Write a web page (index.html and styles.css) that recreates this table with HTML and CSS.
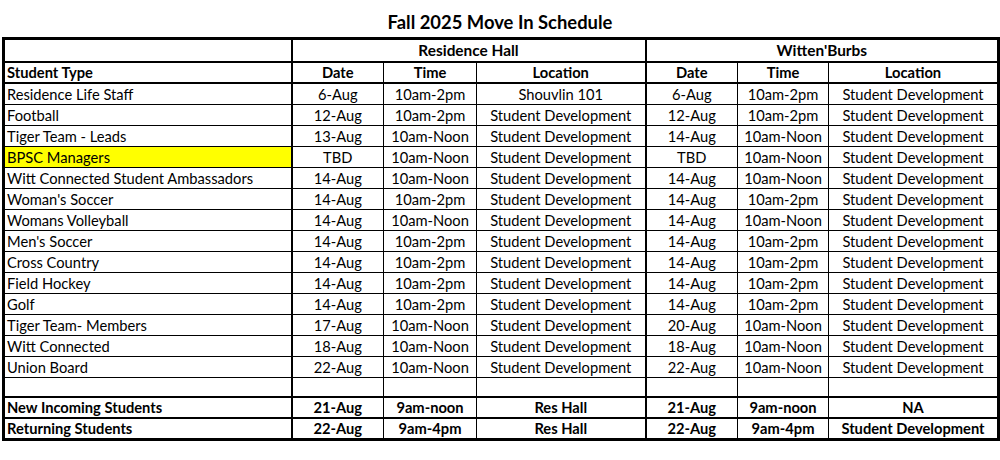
FILE: index.html
```html
<!DOCTYPE html>
<html>
<head>
<meta charset="utf-8">
<link rel="stylesheet" href="styles.css">
</head>
<body>
<div class="page">
  <h1 class="title">Fall 2025 Move In Schedule</h1>
  <table class="sched">
    <colgroup>
      <col class="c-type"><col class="c-date"><col class="c-time"><col class="c-loc">
      <col class="c-date"><col class="c-time2"><col class="c-loc2">
    </colgroup>
    <tr class="group">
      <td class="type"></td>
      <td colspan="3" class="b grp-end">Residence Hall</td>
      <td colspan="3" class="b">Witten'Burbs</td>
    </tr>
    <tr class="head">
      <td class="type b">Student Type</td>
      <td class="b">Date</td><td class="b">Time</td><td class="b grp-end">Location</td>
      <td class="b">Date</td><td class="b">Time</td><td class="b">Location</td>
    </tr>
    <tr><td class="type">Residence Life Staff</td><td>6-Aug</td><td>10am-2pm</td><td class="grp-end">Shouvlin 101</td><td>6-Aug</td><td>10am-2pm</td><td>Student Development</td></tr>
    <tr><td class="type">Football</td><td>12-Aug</td><td>10am-2pm</td><td class="grp-end">Student Development</td><td>12-Aug</td><td>10am-2pm</td><td>Student Development</td></tr>
    <tr><td class="type">Tiger Team - Leads</td><td>13-Aug</td><td>10am-Noon</td><td class="grp-end">Student Development</td><td>14-Aug</td><td>10am-Noon</td><td>Student Development</td></tr>
    <tr><td class="type hl">BPSC Managers</td><td>TBD</td><td>10am-Noon</td><td class="grp-end">Student Development</td><td>TBD</td><td>10am-Noon</td><td>Student Development</td></tr>
    <tr><td class="type">Witt Connected Student Ambassadors</td><td>14-Aug</td><td>10am-Noon</td><td class="grp-end">Student Development</td><td>14-Aug</td><td>10am-Noon</td><td>Student Development</td></tr>
    <tr><td class="type">Woman's Soccer</td><td>14-Aug</td><td>10am-2pm</td><td class="grp-end">Student Development</td><td>14-Aug</td><td>10am-2pm</td><td>Student Development</td></tr>
    <tr><td class="type">Womans Volleyball</td><td>14-Aug</td><td>10am-Noon</td><td class="grp-end">Student Development</td><td>14-Aug</td><td>10am-Noon</td><td>Student Development</td></tr>
    <tr><td class="type">Men's Soccer</td><td>14-Aug</td><td>10am-2pm</td><td class="grp-end">Student Development</td><td>14-Aug</td><td>10am-2pm</td><td>Student Development</td></tr>
    <tr><td class="type">Cross Country</td><td>14-Aug</td><td>10am-2pm</td><td class="grp-end">Student Development</td><td>14-Aug</td><td>10am-2pm</td><td>Student Development</td></tr>
    <tr><td class="type">Field Hockey</td><td>14-Aug</td><td>10am-2pm</td><td class="grp-end">Student Development</td><td>14-Aug</td><td>10am-2pm</td><td>Student Development</td></tr>
    <tr><td class="type">Golf</td><td>14-Aug</td><td>10am-2pm</td><td class="grp-end">Student Development</td><td>14-Aug</td><td>10am-2pm</td><td>Student Development</td></tr>
    <tr><td class="type">Tiger Team- Members</td><td>17-Aug</td><td>10am-Noon</td><td class="grp-end">Student Development</td><td>20-Aug</td><td>10am-Noon</td><td>Student Development</td></tr>
    <tr><td class="type">Witt Connected</td><td>18-Aug</td><td>10am-Noon</td><td class="grp-end">Student Development</td><td>18-Aug</td><td>10am-Noon</td><td>Student Development</td></tr>
    <tr><td class="type">Union Board</td><td>22-Aug</td><td>10am-Noon</td><td class="grp-end">Student Development</td><td>22-Aug</td><td>10am-Noon</td><td>Student Development</td></tr>
    <tr class="blank"><td class="type"></td><td></td><td></td><td class="grp-end"></td><td></td><td></td><td></td></tr>
    <tr class="bold-row"><td class="type">New Incoming Students</td><td>21-Aug</td><td>9am-noon</td><td class="grp-end">Res Hall</td><td>21-Aug</td><td>9am-noon</td><td>NA</td></tr>
    <tr class="bold-row"><td class="type">Returning Students</td><td>22-Aug</td><td>9am-4pm</td><td class="grp-end">Res Hall</td><td>22-Aug</td><td>9am-4pm</td><td>Student Development</td></tr>
  </table>
</div>
</body>
</html>
```
FILE: styles.css
```css
html, body {
  margin: 0;
  padding: 0;
  background: #fff;
}
body {
  font-family: Lato, "Open Sans", "Liberation Sans", sans-serif;
  color: #000;
}
.page {
  padding: 0 2px 0 2px;
}
.title {
  margin: 0;
  height: 37px;
  padding-top: 11px;
  box-sizing: border-box;
  text-align: center;
  font-size: 18.4px;
  font-weight: 700;
  line-height: 22px;
}
.sched {
  width: 996px;
  table-layout: fixed;
  border-collapse: collapse;
  border: 3px solid #000;
  font-size: 14.7px;
}
.c-type { width: 288px; }
.c-date { width: 92px; }
.c-time { width: 93px; }
.c-loc { width: 169px; }
.c-time2 { width: 91px; }
.c-loc2 { width: 170px; }
.sched td {
  height: 20px;
  padding: 0 2px;
  line-height: 19px;
  text-align: center;
  border: 1px solid #000;
  white-space: nowrap;
  overflow: hidden;
}
.sched td.type {
  text-align: left;
  border-right: 2px solid #000;
}
.sched td.grp-end {
  border-right: 2px solid #000;
}
.sched .group td {
  height: 21px;
  font-size: 15.4px;
  border-bottom: 2px solid #000;
}
.sched .head td {
  height: 16px;
  border-bottom: 2px solid #000;
}
.b { font-weight: 700; }
.hl { background: #ffff00; }
.sched .blank td {
  height: 18px;
  border-bottom: 2px solid #000;
}
.sched .bold-row td {
  height: 19px;
  font-weight: 700;
  border-bottom: 2px solid #000;
}
```
